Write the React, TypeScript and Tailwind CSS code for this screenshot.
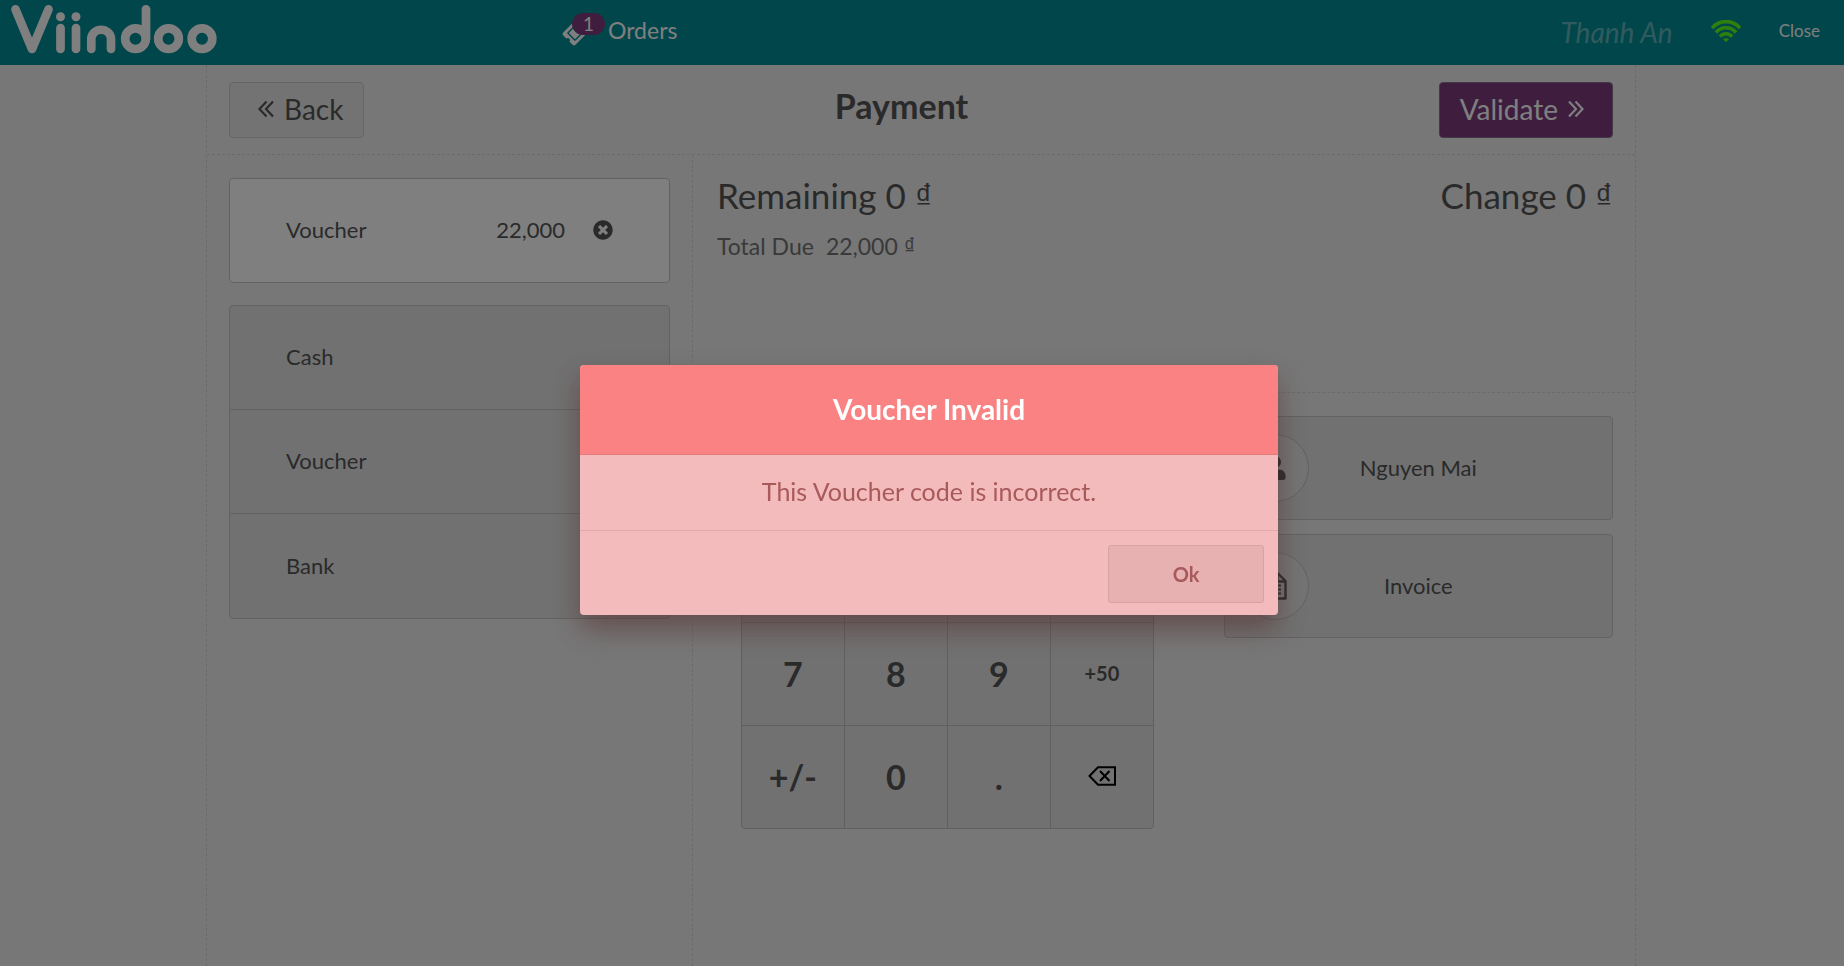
import React, { useState } from "react";
import { FaTicketAlt, FaTimesCircle, FaUser } from "react-icons/fa";

const METHODS = ["Cash", "Voucher", "Bank"];

const KEYS = ["1", "2", "3", "+10", "4", "5", "6", "+20", "7", "8", "9", "+50", "+/-", "0", ".", "Backspace"];

const Logo = () => (
  <svg
    viewBox="0 0 222 56"
    className="h-[56px] w-[222px]"
    fill="none"
    stroke="#ffffff"
    strokeWidth="8.7"
    strokeLinecap="round"
    strokeLinejoin="round"
    role="img"
    aria-label="Viindoo"
  >
    <path d="M15.5 9.300L32 49L48.500 9.300" />
    <path d="M60.500 28V49M76 28V49" />
    <circle cx="60.500" cy="16.700" r="4.500" fill="#ffffff" stroke="none" />
    <circle cx="76" cy="16.700" r="4.500" fill="#ffffff" stroke="none" />
    <path d="M91.300 49V38A10 10 0 0 1 111 38V49" />
    <circle cx="135.500" cy="38.700" r="10.300" />
    <path d="M146 9.300V38.700" />
    <circle cx="168.500" cy="38.700" r="10.300" />
    <circle cx="202" cy="38.700" r="10.300" />
  </svg>
);

const Wifi = () => (
  <svg viewBox="0 0 30 22" className="h-[22px] w-[30px]" fill="none" stroke="#5cff1a" strokeWidth="3.6">
    <path d="M1 8A18.500 18.500 0 0 1 29 8" />
    <path d="M5 12.500A13 13 0 0 1 25 12.500" />
    <path d="M9 16.700A7.500 7.500 0 0 1 21 16.700" />
    <path d="M15 22L12 19.300Q15 17 18 19.300Z" fill="#5cff1a" stroke="none" />
  </svg>
);

const Chevrons = ({ flip }: { flip?: boolean }) => (
  <svg
    viewBox="0 0 16 18"
    className={flip ? "h-[18px] w-4 rotate-180" : "h-[18px] w-4"}
    fill="none"
    stroke="currentColor"
    strokeWidth="2.2"
  >
    <path d="M8.500 1.500L1.500 9L8.500 16.500M15 1.500L8 9L15 16.500" />
  </svg>
);

const InvoiceIcon = () => (
  <svg viewBox="0 0 24 28" className="h-7 w-6" fill="none" stroke="currentColor" strokeWidth="2.4">
    <path d="M1.500 1.500H15L22.500 9V26.500H1.500Z" strokeLinejoin="round" />
    <path d="M14.500 1.500V9.500H22.500" />
    <path d="M6 13.500H18M6 17.500H18M6 21.500H18" strokeWidth="1.800" />
  </svg>
);

const BackspaceIcon = () => (
  <svg viewBox="0 0 28 20" className="h-5 w-7" fill="none" stroke="#000000" strokeWidth="2">
    <path d="M1.500 10L10 1.200H27V18.800H10Z" />
    <path d="M12 5L21.500 15M21.500 5L12 15" />
  </svg>
);

const Dong = () => <span className="font-['Liberation_Sans',sans-serif]">₫</span>;

const Header = () => (
  <header className="flex h-[65px] items-center bg-[#008c96] pr-6 text-white">
    <div className="h-full w-[30%]">
      <Logo />
    </div>
    <a href="#orders" className="relative flex items-center gap-[18px] pb-1 pl-[18px] text-[23px]">
      <FaTicketAlt className="-rotate-45" size={26} />
      <span className="absolute top-0 left-[26px] h-[22px] w-[33px] rounded-full bg-[#7c3a7c] text-center text-[19px] leading-[22px]">
        1
      </span>
      Orders
    </a>
    <span className="ml-auto pb-0.5 text-[28px] text-white/40 italic">Thanh An</span>
    <span className="mx-[38px] pb-1">
      <Wifi />
    </span>
    <button className="pb-1 text-[17px]">Close</button>
  </header>
);

const PaymentMethods = () => (
  <div className="w-[485px] px-[22px] pt-[23px]">
    <div className="flex h-[105px] items-center rounded-[4px] border border-[#c4c4c4] bg-white px-14 pb-0.5">
      <span>Voucher</span>
      <span className="ml-auto">22,000</span>
      <button className="ml-7" aria-label="Remove voucher">
        <FaTimesCircle size={20} />
      </button>
    </div>
    <div className="mt-[22px] divide-y divide-[#c4c4c4] overflow-hidden rounded-[4px] border border-[#c4c4c4] bg-[#e2e2e2]">
      {METHODS.map((method) => (
        <button key={method} className="block h-[104px] w-full px-14 pb-0.5 text-left">
          {method}
        </button>
      ))}
    </div>
  </div>
);

const Numpad = () => (
  <div className="grid grid-cols-4 gap-px overflow-hidden rounded-[4px] border border-[#c0c0c0] bg-[#c0c0c0]">
    {KEYS.map((key) => (
      <button
        key={key}
        aria-label={key}
        className={`flex h-[102px] w-[102px] items-center justify-center bg-[#e2e2e2] pb-0.5 font-bold ${
          /^\+\d/.test(key) ? "text-xl" : "text-[34px]"
        }`}
      >
        {key === "Backspace" ? <BackspaceIcon /> : key}
      </button>
    ))}
  </div>
);

const SideButton = ({ icon, label }: { icon: React.ReactNode; label: string }) => (
  <button className="flex h-[104px] w-full items-center rounded-[4px] border border-[#c4c4c4] bg-[#e2e2e2] px-4">
    <span className="flex size-[68px] items-center justify-center rounded-full border border-[#c4c4c4] bg-[#e8e8e8]">
      {icon}
    </span>
    <span className="flex-1 pr-[68px] pb-0.5 text-center">{label}</span>
  </button>
);

const ErrorPopup = ({ onClose }: { onClose: () => void }) => (
  <div className="fixed inset-0 flex items-center justify-center bg-black/50 pt-3.5 pl-3.5">
    <div
      role="alertdialog"
      aria-labelledby="popup-title"
      className="w-[698px] overflow-hidden rounded-[4px] bg-[#f3bbbb] text-[#a85959] shadow-[0_14px_28px_rgba(86,50,50,0.6)]"
    >
      <h2
        id="popup-title"
        className="flex h-[90px] items-center justify-center border-b border-[#e57a7c] bg-[#fa8282] pb-0.5 text-[28px] font-bold text-white"
      >
        Voucher Invalid
      </h2>
      <p className="flex h-[75px] items-center justify-center pb-0.5 text-[25px]">This Voucher code is incorrect.</p>
      <footer className="flex h-[85px] justify-end border-t border-[#e3a9a9] p-3.5">
        <button
          onClick={onClose}
          className="h-[58px] w-[156px] rounded-[3px] border border-[#d9a3a3] bg-[#e7b1b1] text-xl font-bold"
        >
          Ok
        </button>
      </footer>
    </div>
  </div>
);

const App = () => {
  const [showError, setShowError] = useState(true);

  return (
    <div className="flex min-h-screen flex-col bg-[#efefef] font-['Lato',sans-serif] text-[22px] text-[#555555]">
      <Header />

      <main className="flex flex-1 flex-col pr-0.5">
        <div className="mx-auto flex w-full max-w-[1430px] flex-1 flex-col border-x border-dashed border-[#d7d7d7]">
          <div className="flex h-[90px] items-start justify-between border-b border-dashed border-[#d7d7d7] px-[22px] pt-[17px]">
            <button className="flex h-14 items-center gap-2.5 rounded-[4px] border border-[#cccccc] bg-[#e6e6e6] pr-5 pb-0.5 pl-7 text-[28px]">
              <Chevrons />
              Back
            </button>
            <h1 className="text-[34px] leading-[48px] font-bold">Payment</h1>
            <button className="flex h-14 items-center gap-2.5 rounded-[4px] border border-[#8a7090] bg-[#7c3a7c] pr-7 pb-0.5 pl-5 text-[28px] text-white">
              Validate
              <Chevrons flip />
            </button>
          </div>

          <div className="flex flex-1">
            <PaymentMethods />

            <div className="flex-1 border-l border-dashed border-[#d7d7d7]">
              <section className="h-[238px] border-b border-dashed border-[#d7d7d7] pt-4 pr-[22px] pl-6">
                <div className="flex justify-between text-[35px] leading-[48px]">
                  <span>
                    Remaining 0 <Dong />
                  </span>
                  <span>
                    Change 0 <Dong />
                  </span>
                </div>
                <div className="mt-2 flex gap-3 text-[23px] opacity-80">
                  <span>Total Due</span>
                  <span>
                    22,000 <Dong />
                  </span>
                </div>
              </section>

              <section className="flex">
                <div className="flex flex-1 justify-center pt-[23px]">
                  <Numpad />
                </div>
                <div className="flex w-[46%] flex-col gap-3.5 px-[22px] pt-[23px]">
                  <SideButton icon={<FaUser size={24} />} label="Nguyen Mai" />
                  <SideButton icon={<InvoiceIcon />} label="Invoice" />
                </div>
              </section>
            </div>
          </div>
        </div>
      </main>

      {showError && <ErrorPopup onClose={() => setShowError(false)} />}
    </div>
  );
};

export default App;
